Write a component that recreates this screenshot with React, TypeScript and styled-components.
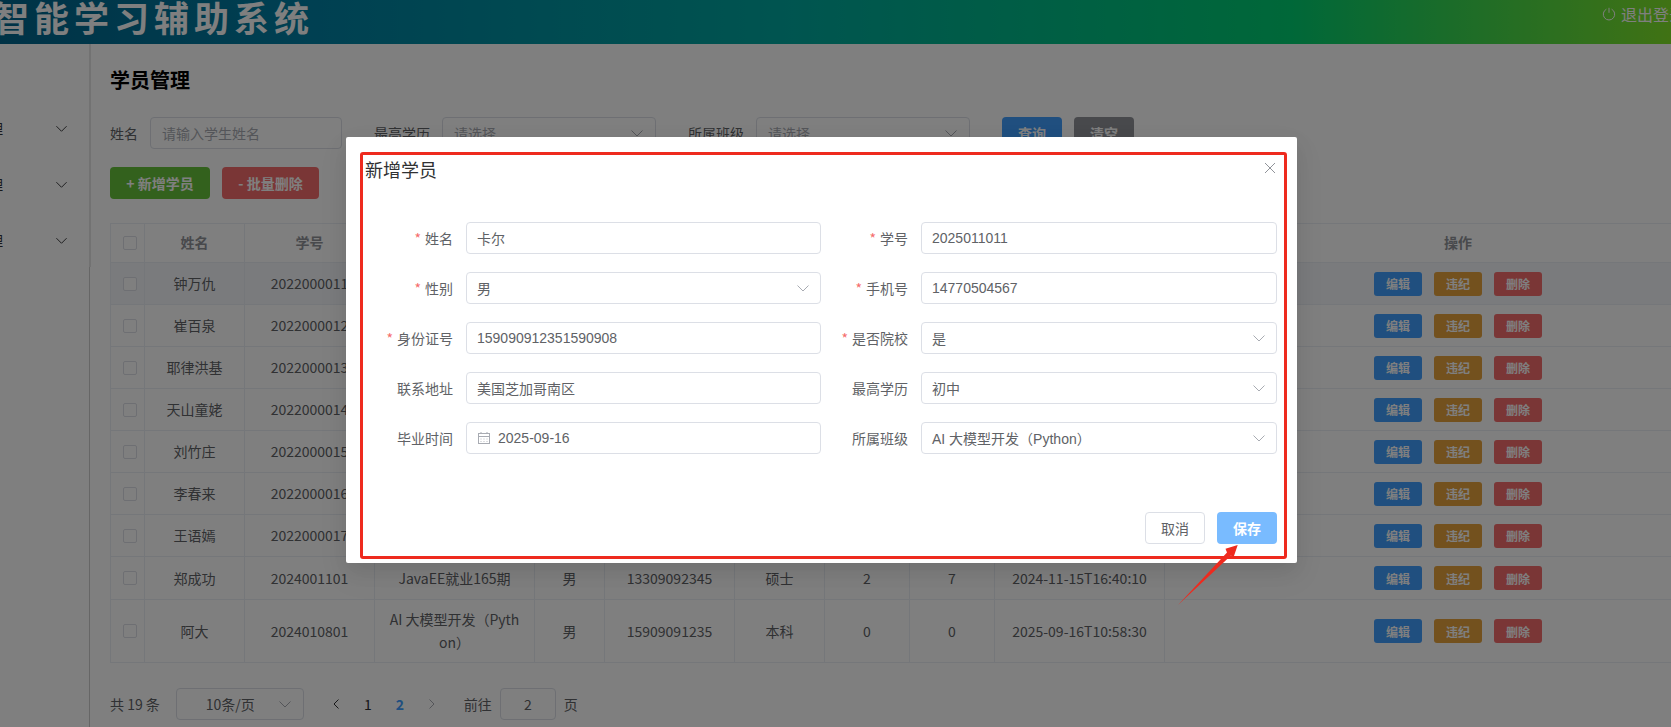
import React from "react";
import styled, { createGlobalStyle } from "styled-components";

const GlobalStyle = createGlobalStyle`
    html, body {
        margin: 0;
        padding: 0;
        background: #fff;
    }
    body {
        font-family: "Noto Sans CJK SC", "Noto Sans", sans-serif;
        font-size: 14px;
        color: #606266;
    }
`

const Page = styled.div`
    position: relative;
    width: 1671px;
    height: 727px;
    overflow: hidden;
    background: #fff;
`
const Header = styled.header`
    display: flex;
    justify-content: space-between;
    align-items: flex-start;
    height: 44px;
    background-image: linear-gradient(to right, #00547d -200px, #007fa4 297px, #00aaa0 794px, #00d072 1290px, #a8eb12 1787px);
`
const AppTitle = styled.div`
    margin: -2px 0 0 -6px;
    font-size: 35px;
    font-weight: 700;
    line-height: 38px;
    letter-spacing: 5px;
    color: #fff;
    white-space: nowrap;
`
const Logout = styled.div`
    display: flex;
    align-items: center;
    gap: 5px;
    margin: 2px -14px 0 0;
    font-size: 16px;
    line-height: 24px;
    color: #fff;
    white-space: nowrap;
`
const Layout = styled.div`
    display: flex;
`
const Sidebar = styled.aside`
    position: relative;
    flex: 0 0 90px;
    box-sizing: border-box;
    height: 683px;
    padding: 56px 21px 0 0;
    border-right: 1px solid #ccc;

    &::after {
        content: "";
        position: absolute;
        top: 0;
        right: -2px;
        width: 2px;
        height: 223px;
        background: #e4e4e4;
    }
`
const MenuItem = styled.div`
    display: flex;
    justify-content: space-between;
    align-items: center;
    height: 56px;
    color: #303133;
`
const MenuLabel = styled.span`
    margin-left: -81px;
    white-space: nowrap;
`
const Main = styled.main`
    flex: 1;
    min-width: 0;
    padding: 22px 0 0 20px;
`
const PageTitle = styled.h1`
    margin: 0 0 23px;
    font-size: 20px;
    font-weight: 700;
    line-height: 28px;
    color: #000;
`
const SearchBar = styled.div`
    display: flex;
    align-items: center;
    gap: 32px;
    margin-bottom: 18px;
`
const SearchItem = styled.div`
    display: flex;
    align-items: center;
    gap: 12px;
`
const SearchBox = styled.div<{ $width: number }>`
    display: flex;
    justify-content: space-between;
    align-items: center;
    box-sizing: border-box;
    width: ${p => p.$width}px;
    height: 32px;
    padding: 0 11px;
    border: 1px solid #dcdfe6;
    border-radius: 4px;
    color: #a8abb2;
`
const Buttons = styled.div`
    display: flex;
    gap: 12px;
`
const ActionBar = styled(Buttons)`
    margin-bottom: 24px;
`
const palette = {
    primary: "#409eff",
    success: "#67c23a",
    danger: "#f56c6c",
    warning: "#e6a23c",
    muted: "#909399",
}
const Button = styled.button<{ $tone: keyof typeof palette; $width: number }>`
    box-sizing: border-box;
    width: ${p => p.$width}px;
    height: 32px;
    padding: 0;
    border: 0;
    border-radius: 4px;
    background: ${p => palette[p.$tone]};
    color: #fff;
    font-family: inherit;
    font-size: 14px;
    font-weight: 600;
`
const MiniButton = styled(Button)`
    height: 24px;
    border-radius: 3px;
    font-size: 12px;
`
const Table = styled.table`
    table-layout: fixed;
    width: 1641px;
    border-collapse: separate;
    border-spacing: 0;
    border-top: 1px solid #ebeef5;
    border-left: 1px solid #ebeef5;
    margin-bottom: 25px;
`
const Row = styled.tr<{ $hover?: boolean; $height?: number }>`
    height: ${p => p.$height ?? 42}px;
    background: ${p => (p.$hover ? "#f5f7fa" : "transparent")};
`
const HeadCell = styled.th`
    box-sizing: border-box;
    padding: 0 12px 2px;
    border-right: 1px solid #ebeef5;
    border-bottom: 1px solid #ebeef5;
    font-size: 14px;
    font-weight: 700;
    color: #909399;
    text-align: center;
`
const Cell = styled.td`
    box-sizing: border-box;
    padding: 0 12px;
    border-right: 1px solid #ebeef5;
    border-bottom: 1px solid #ebeef5;
    font-size: 14px;
    line-height: 23px;
    color: #606266;
    text-align: center;
    word-break: break-all;
`
const CheckCell = styled(Cell)`
    padding: 0 0 0 4px;
`
const CheckHead = styled(HeadCell)`
    padding: 0 0 0 4px;
`
const Checkbox = styled.span`
    display: block;
    box-sizing: border-box;
    width: 14px;
    height: 14px;
    margin: 0 auto;
    border: 1px solid #dcdfe6;
    border-radius: 2px;
    background: #fff;
`
const RowActions = styled.div`
    display: flex;
    justify-content: center;
    gap: 12px;
`
const Pagination = styled.div`
    display: flex;
    align-items: center;
    height: 32px;
    line-height: 32px;
`
const PageSize = styled.div`
    display: flex;
    align-items: center;
    justify-content: space-between;
    box-sizing: border-box;
    width: 128px;
    height: 32px;
    margin: 0 16px;
    padding: 0 11px 0 29px;
    border: 1px solid #dcdfe6;
    border-radius: 4px;
`
const Pager = styled.div<{ $active?: boolean }>`
    display: flex;
    justify-content: center;
    align-items: center;
    width: 32px;
    height: 32px;
    color: ${p => (p.$active ? "#409eff" : "#303133")};
    font-weight: ${p => (p.$active ? 700 : 400)};
`
const JumpLabel = styled.span`
    margin-left: 16px;
`
const JumpBox = styled.div`
    box-sizing: border-box;
    width: 56px;
    height: 32px;
    margin: 0 8px;
    border: 1px solid #dcdfe6;
    border-radius: 4px;
    line-height: 30px;
    text-align: center;
`
const Mask = styled.div`
    position: absolute;
    inset: 0;
    background: rgba(0, 0, 0, 0.5);
`
const Dialog = styled.div`
    position: relative;
    box-sizing: border-box;
    width: 951px;
    height: 426px;
    margin: 137px 0 0 346px;
    padding: 19px 20px 0 19px;
    border-radius: 2px;
    background: #fff;
    box-shadow: 0 12px 32px 4px rgba(0, 0, 0, 0.04), 0 8px 20px rgba(0, 0, 0, 0.08);
`
const DialogHead = styled.div`
    display: flex;
    justify-content: space-between;
    align-items: flex-start;
    height: 26px;
    margin-bottom: 40px;
`
const DialogTitle = styled.span`
    font-size: 18px;
    line-height: 26px;
    color: #303133;
`
const Close = styled.span`
    display: flex;
    margin: 6px 1px 0 0;
`
const Form = styled.div`
    display: grid;
    grid-template-columns: 455px 456px;
    row-gap: 18px;
    margin-left: 1px;
`
const FormItem = styled.div`
    display: flex;
`
const FormLabel = styled.label<{ $required?: boolean }>`
    flex: 0 0 100px;
    box-sizing: border-box;
    height: 32px;
    padding-right: 13px;
    line-height: 32px;
    text-align: right;
    color: #606266;

    &::before {
        content: "${p => (p.$required ? "*" : "")}";
        margin-right: 4px;
        color: #f56c6c;
    }
`
const Field = styled.div`
    display: flex;
    align-items: center;
    justify-content: space-between;
    flex: 1;
    box-sizing: border-box;
    height: 32px;
    padding: 0 10px 1px;
    border: 1px solid #dcdfe6;
    border-radius: 4px;
    font-family: "Liberation Sans", "Noto Sans CJK SC", sans-serif;
    color: #606266;
`
const DateValue = styled.span`
    display: flex;
    align-items: center;
    gap: 7px;
`
const DialogFooter = styled.div`
    display: flex;
    justify-content: flex-end;
    gap: 12px;
    margin: 58px 0 0;
`
const CancelButton = styled.button`
    box-sizing: border-box;
    width: 60px;
    height: 32px;
    padding: 0;
    border: 1px solid #dcdfe6;
    border-radius: 4px;
    background: #fff;
    color: #606266;
    font-family: inherit;
    font-size: 14px;
`
const SaveButton = styled.button`
    width: 60px;
    height: 32px;
    padding: 0;
    border: 0;
    border-radius: 4px;
    background: #79bbff;
    color: #fff;
    font-family: inherit;
    font-size: 14px;
    font-weight: 700;
`
const HighlightBox = styled.div`
    position: absolute;
    top: 15px;
    left: 14px;
    right: 10px;
    bottom: 4px;
    border: 3px solid #ee2a1e;
    border-radius: 3px;
    pointer-events: none;
`
const ArrowMark = styled.svg`
    position: absolute;
    top: 0;
    left: 0;
    pointer-events: none;
`

const ChevronDown = ({ color = "#a8abb2", size = 14 }: { color?: string; size?: number }) => (
    <svg width={size} height={size} viewBox="0 0 14 14" fill="none">
        <path d="M1.5 4.5 7 10l5.5-5.5" stroke={color} strokeWidth="1" />
    </svg>
)
const ChevronSide = ({ dir, color }: { dir: "left" | "right"; color: string }) => (
    <svg width="10" height="12" viewBox="0 0 10 12" fill="none">
        <path d={dir === "left" ? "M7.5 1.5 3 6l4.5 4.5" : "M2.5 1.5 7 6l-4.5 4.5"} stroke={color} strokeWidth="1" />
    </svg>
)
const PowerIcon = () => (
    <svg width="14" height="14" viewBox="0 0 14 14" fill="none" stroke="#fff" strokeWidth="1">
        <path d="M4.4 2.2a5.7 5.7 0 1 0 5.2 0" />
        <path d="M7 .8v5" />
    </svg>
)
const CloseIcon = () => (
    <svg width="12" height="12" viewBox="0 0 12 12" fill="none" stroke="#909399" strokeWidth="1">
        <path d="M1 1l10 10M11 1 1 11" />
    </svg>
)
const CalendarIcon = () => (
    <svg width="14" height="14" viewBox="0 0 14 14" fill="none" stroke="#a8abb2" strokeWidth="1">
        <rect x="1.5" y="2.5" width="11" height="10" />
        <path d="M1.5 5.5h11M4 1v2M10 1v2" />
        <path d="M3.5 8h1M6.5 8h1M9.5 8h1M3.5 10.5h1M6.5 10.5h1M9.5 10.5h1" strokeWidth="0.8" />
    </svg>
)

const columnWidths = [34, 100, 130, 160, 70, 130, 90, 85, 85, 170, 587]

type Student = {
    name: string
    no: string
    rest?: string[]
    height?: number
}

const students: Student[] = [
    { name: "钟万仇", no: "2022000011" },
    { name: "崔百泉", no: "2022000012" },
    { name: "耶律洪基", no: "2022000013" },
    { name: "天山童姥", no: "2022000014" },
    { name: "刘竹庄", no: "2022000015" },
    { name: "李春来", no: "2022000016" },
    { name: "王语嫣", no: "2022000017" },
    { name: "郑成功", no: "2024001101", height: 43, rest: ["JavaEE就业165期", "男", "13309092345", "硕士", "2", "7", "2024-11-15T16:40:10"] },
    { name: "阿大", no: "2024010801", height: 63, rest: ["AI 大模型开发（Python）", "男", "15909091235", "本科", "0", "0", "2025-09-16T10:58:30"] },
]

const blankCells = ["", "", "", "", "", "", ""]

type FieldDef = {
    label: string
    value: string
    required?: boolean
    kind?: "select" | "date"
}

const fields: FieldDef[] = [
    { label: "姓名", value: "卡尔", required: true },
    { label: "学号", value: "2025011011", required: true },
    { label: "性别", value: "男", required: true, kind: "select" },
    { label: "手机号", value: "14770504567", required: true },
    { label: "身份证号", value: "159090912351590908", required: true },
    { label: "是否院校", value: "是", required: true, kind: "select" },
    { label: "联系地址", value: "美国芝加哥南区" },
    { label: "最高学历", value: "初中", kind: "select" },
    { label: "毕业时间", value: "2025-09-16", kind: "date" },
    { label: "所属班级", value: "AI 大模型开发（Python）", kind: "select" },
]

export default function App() {
    return (
        <Page>
            <GlobalStyle />
            <Header>
                <AppTitle>智能学习辅助系统</AppTitle>
                <Logout>
                    <PowerIcon />
                    退出登录
                </Logout>
            </Header>
            <Layout>
                <Sidebar>
                    {["班级学员管理", "系统信息管理", "数据统计管理"].map(label => (
                        <MenuItem key={label}>
                            <MenuLabel>{label}</MenuLabel>
                            <ChevronDown color="#303133" size={13} />
                        </MenuItem>
                    ))}
                </Sidebar>
                <Main>
                    <PageTitle>学员管理</PageTitle>
                    <SearchBar>
                        <SearchItem>
                            姓名
                            <SearchBox $width={192}>请输入学生姓名</SearchBox>
                        </SearchItem>
                        <SearchItem>
                            最高学历
                            <SearchBox $width={214}>
                                请选择
                                <ChevronDown />
                            </SearchBox>
                        </SearchItem>
                        <SearchItem>
                            所属班级
                            <SearchBox $width={214}>
                                请选择
                                <ChevronDown />
                            </SearchBox>
                        </SearchItem>
                        <Buttons>
                            <Button $tone="primary" $width={60}>查询</Button>
                            <Button $tone="muted" $width={60}>清空</Button>
                        </Buttons>
                    </SearchBar>
                    <ActionBar>
                        <Button $tone="success" $width={100}>+ 新增学员</Button>
                        <Button $tone="danger" $width={97}>- 批量删除</Button>
                    </ActionBar>
                    <Table>
                        <colgroup>
                            {columnWidths.map((w, i) => (
                                <col key={i} width={w} />
                            ))}
                        </colgroup>
                        <thead>
                            <Row $height={39}>
                                <CheckHead><Checkbox /></CheckHead>
                                <HeadCell>姓名</HeadCell>
                                <HeadCell>学号</HeadCell>
                                {blankCells.map((_, i) => (
                                    <HeadCell key={i} />
                                ))}
                                <HeadCell>操作</HeadCell>
                            </Row>
                        </thead>
                        <tbody>
                            {students.map((s, i) => (
                                <Row key={s.no} $hover={i === 0} $height={s.height}>
                                    <CheckCell><Checkbox /></CheckCell>
                                    <Cell>{s.name}</Cell>
                                    <Cell>{s.no}</Cell>
                                    {(s.rest ?? blankCells).map((text, j) => (
                                        <Cell key={j}>{text}</Cell>
                                    ))}
                                    <Cell>
                                        <RowActions>
                                            <MiniButton $tone="primary" $width={48}>编辑</MiniButton>
                                            <MiniButton $tone="warning" $width={48}>违纪</MiniButton>
                                            <MiniButton $tone="danger" $width={48}>删除</MiniButton>
                                        </RowActions>
                                    </Cell>
                                </Row>
                            ))}
                        </tbody>
                    </Table>
                    <Pagination>
                        共 19 条
                        <PageSize>
                            10条/页
                            <ChevronDown />
                        </PageSize>
                        <Pager><ChevronSide dir="left" color="#303133" /></Pager>
                        <Pager>1</Pager>
                        <Pager $active>2</Pager>
                        <Pager><ChevronSide dir="right" color="#a8abb2" /></Pager>
                        <JumpLabel>前往</JumpLabel>
                        <JumpBox>2</JumpBox>
                        页
                    </Pagination>
                </Main>
            </Layout>
            <Mask>
                <Dialog>
                    <DialogHead>
                        <DialogTitle>新增学员</DialogTitle>
                        <Close><CloseIcon /></Close>
                    </DialogHead>
                    <Form>
                        {fields.map(f => (
                            <FormItem key={f.label}>
                                <FormLabel $required={f.required}>{f.label}</FormLabel>
                                <Field>
                                    {f.kind === "date" ? (
                                        <DateValue>
                                            <CalendarIcon />
                                            {f.value}
                                        </DateValue>
                                    ) : (
                                        f.value
                                    )}
                                    {f.kind === "select" && <ChevronDown />}
                                </Field>
                            </FormItem>
                        ))}
                    </Form>
                    <DialogFooter>
                        <CancelButton>取消</CancelButton>
                        <SaveButton>保存</SaveButton>
                    </DialogFooter>
                    <HighlightBox />
                </Dialog>
                <ArrowMark width="1671" height="727" viewBox="0 0 1671 727">
                    <polygon points="1178,605 1227,552.5 1225.5,548.7 1237.7,545 1233.3,558 1231,555.5" fill="#ee2a1e" />
                </ArrowMark>
            </Mask>
        </Page>
    )
}
